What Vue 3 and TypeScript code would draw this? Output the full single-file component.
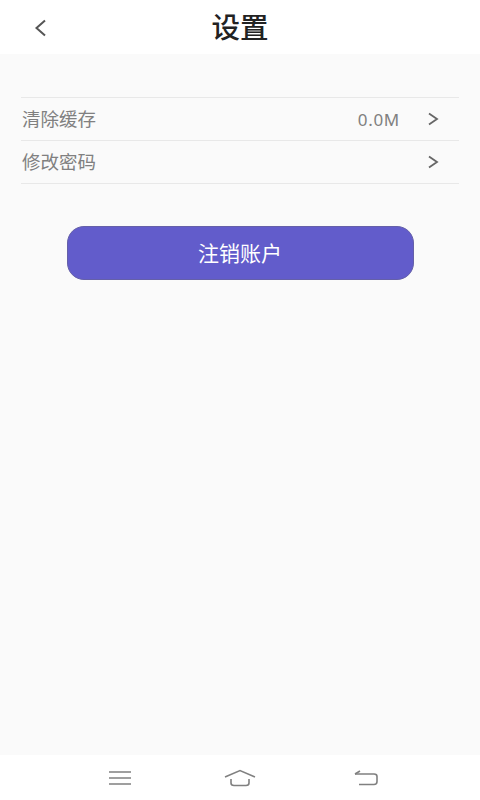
<script setup lang="ts">
const rows = [
  { label: '清除缓存', value: '0.0M' },
  { label: '修改密码', value: '' },
]
</script>

<template>
  <div class="page">
    <header class="top">
      <svg class="back" width="16" height="20" viewBox="0 0 16 20" fill="none">
        <path d="M13 2.5 L4.5 10 L13 17.5" stroke="#555" stroke-width="2" />
      </svg>
      <h1 class="title">设置</h1>
    </header>
    <main class="content">
      <ul class="list">
        <li v-for="r in rows" :key="r.label" class="row">
          <span class="label">{{ r.label }}</span>
          <span class="value">{{ r.value }}</span>
          <svg class="chev" width="12" height="14" viewBox="0 0 12 14" fill="none">
            <path d="M2 1.5 L10 7 L2 12.5" stroke="#666" stroke-width="1.8" />
          </svg>
        </li>
      </ul>
      <button class="btn">注销账户</button>
    </main>
    <nav class="nav">
      <svg width="24" height="16" viewBox="0 0 24 16" fill="none" stroke="#808080" stroke-width="1.6">
        <path d="M1 2 H23 M1 8 H23 M1 14 H23" />
      </svg>
      <svg width="32" height="18" viewBox="0 0 32 18" fill="none" stroke="#808080" stroke-width="1.6">
        <path d="M1 8 L16 1.5 L31 8" />
        <path d="M7 10 V14 Q7 16.5 10 16.5 H22 Q25 16.5 25 14 V10" />
      </svg>
      <svg width="24" height="16" viewBox="0 0 24 16" fill="none" stroke="#808080" stroke-width="1.6">
        <path d="M1 4 H20 Q23 4 23 6.5 V11.5 Q23 14.5 20 14.5 H5" />
        <path d="M1 4 L6 1" />
      </svg>
    </nav>
  </div>
</template>

<style scoped>
.page {
  width: 480px;
  height: 800px;
  display: flex;
  flex-direction: column;
  background: #fafafa;
  font-family: "Noto Sans CJK SC", "Noto Sans", sans-serif;
}
.top {
  height: 54px;
  flex: none;
  background: #fff;
  display: flex;
  align-items: center;
  justify-content: center;
  position: relative;
}
.back {
  position: absolute;
  left: 32px;
  top: 18px;
}
.title {
  margin: 0;
  font-size: 28.5px;
  font-weight: 500;
  color: #222;
  line-height: 52px;
  height: 54px;
}
.content {
  flex: 1;
  padding: 43px 21px 0;
  display: flex;
  flex-direction: column;
  align-items: center;
}
.list {
  list-style: none;
  margin: 0;
  padding: 0;
  width: 100%;
  border-top: 1px solid #e8e8e8;
}
.row {
  height: 42px;
  border-bottom: 1px solid #e8e8e8;
  display: flex;
  align-items: center;
  padding: 0 20px 0 1px;
  color: #808080;
  font-size: 18.5px;
}
.label {
  flex: 1;
  line-height: 40px;
  height: 42px;
}
.value {
  font-size: 17px;
  letter-spacing: 0.7px;
  color: #808080;
  margin-right: 27px;
  font-family: "Noto Sans", sans-serif;
}
.btn {
  margin-top: 42px;
  width: 347px;
  height: 54px;
  border: 1.5px solid #6560a8;
  border-radius: 17px;
  background: #625ccb;
  color: #fff;
  font-family: inherit;
  font-size: 21px;
  line-height: 50px;
  padding: 0 0 3px;
}
.nav {
  height: 45px;
  box-sizing: border-box;
  flex: none;
  background: #fff;
  display: flex;
  align-items: center;
  padding: 0 102px 0 108px;
}
.nav svg:nth-child(2) {
  margin-left: 92px;
}
.nav svg:nth-child(3) {
  margin-left: auto;
}
</style>

<style>
html, body { margin: 0; }
</style>
